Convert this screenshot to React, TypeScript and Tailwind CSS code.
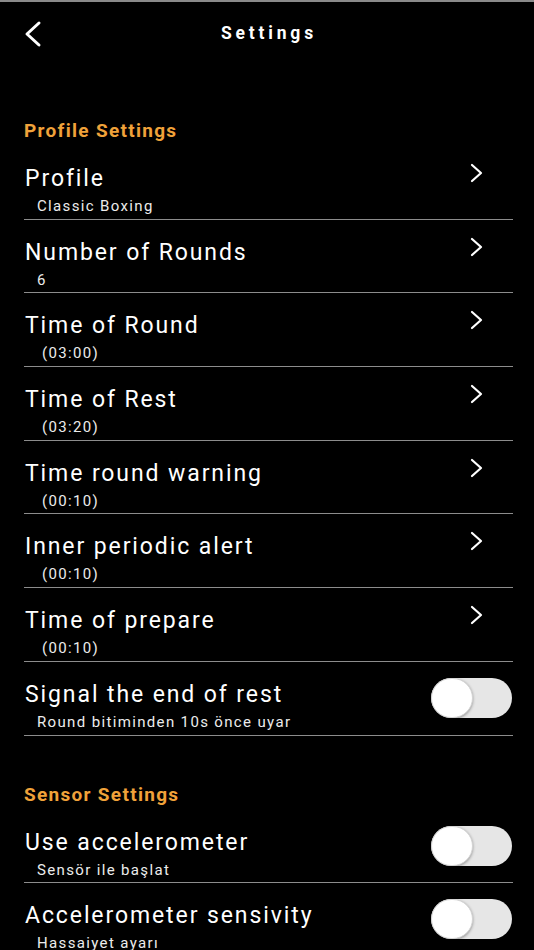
import React, { useState } from 'react';

interface Row {
    title: string;
    value: string;
    indent?: boolean;
    toggle?: boolean;
}

const profileRows: Row[] = [
    { title: 'Profile', value: 'Classic Boxing' },
    { title: 'Number of Rounds', value: '6' },
    { title: 'Time of Round', value: '(03:00)', indent: true },
    { title: 'Time of Rest', value: '(03:20)', indent: true },
    { title: 'Time round warning', value: '(00:10)', indent: true },
    { title: 'Inner periodic alert', value: '(00:10)', indent: true },
    { title: 'Time of prepare', value: '(00:10)', indent: true },
    { title: 'Signal the end of rest', value: 'Round bitiminden 10s önce uyar', toggle: true },
];

const sensorRows: Row[] = [
    { title: 'Use accelerometer', value: 'Sensör ile başlat', toggle: true },
    { title: 'Accelerometer sensivity', value: 'Hassaiyet ayarı', toggle: true },
];

const Chevron = () => (
    <svg width="16" height="20" viewBox="0 0 16 20" fill="none">
        <polyline points="3,2 12,10 3,18" stroke="white" strokeWidth="2.2" strokeLinecap="round" strokeLinejoin="round" />
    </svg>
);

const Toggle = () => {
    const [on, setOn] = useState(false);
    return (
        <button
            onClick={() => setOn(!on)}
            className={`w-[81px] h-[40px] rounded-full p-0 relative ${on ? 'bg-[#4cd964]' : 'bg-[#e6e6e6]'}`}
        >
            <span
                className={`absolute top-0 ${on ? 'right-0' : 'left-0'} w-[42px] h-[40px] rounded-full bg-white shadow-[0_1px_3px_rgba(0,0,0,0.35)] border border-[#d4d4d4]`}
            />
        </button>
    );
};

const SettingRow = ({ row }: { row: Row }) => (
    <div className="h-[73.7px] ml-[24px] mr-[21px] border-b-[1.5px] border-[#8c8c8c] flex justify-between">
        <div className="pt-[19px]">
            <div className="text-[23px] leading-[28px] tracking-[1.9px] text-white pl-[1px]">{row.title}</div>
            <div className={`mt-[4px] text-[15px] leading-[18px] tracking-[1.35px] text-[#ececec] ${row.indent ? 'pl-[18px]' : 'pl-[13px]'}`}>
                {row.value}
            </div>
        </div>
        {row.toggle ? (
            <div className="pt-[16px] mr-[1px]">
                <Toggle />
            </div>
        ) : (
            <div className="pt-[17px] pr-[28px]">
                <Chevron />
            </div>
        )}
    </div>
);

export default function App() {
    return (
        <div className="w-[534px] h-[950px] bg-black overflow-hidden font-['Roboto',sans-serif]">
            <div className="h-[2px] bg-[#8a8a8a]" />
            {/* Header */}
            <div className="h-[62px] relative flex items-center justify-center">
                <div className="absolute left-[22px] top-[18px]">
                    <svg width="22" height="28" viewBox="0 0 22 28" fill="none">
                        <polyline points="17,3 5,14 17,25" stroke="white" strokeWidth="3" strokeLinecap="round" strokeLinejoin="round" />
                    </svg>
                </div>
                <h1 className="text-[17.5px] font-bold text-white tracking-[3.8px] pl-[4px]">Settings</h1>
            </div>

            {/* Profile Settings */}
            <div className="pt-[55px] pb-[3px] pl-[24px] text-[19px] leading-[24px] tracking-[1.3px] font-bold text-[#f0a23a]">
                Profile Settings
            </div>
            {profileRows.map((row) => (
                <SettingRow key={row.title} row={row} />
            ))}

            {/* Sensor Settings */}
            <div className="pt-[47px] pb-[3px] pl-[24px] text-[19px] leading-[24px] tracking-[1.3px] font-bold text-[#f0a23a]">
                Sensor Settings
            </div>
            {sensorRows.map((row) => (
                <SettingRow key={row.title} row={row} />
            ))}
        </div>
    );
}
